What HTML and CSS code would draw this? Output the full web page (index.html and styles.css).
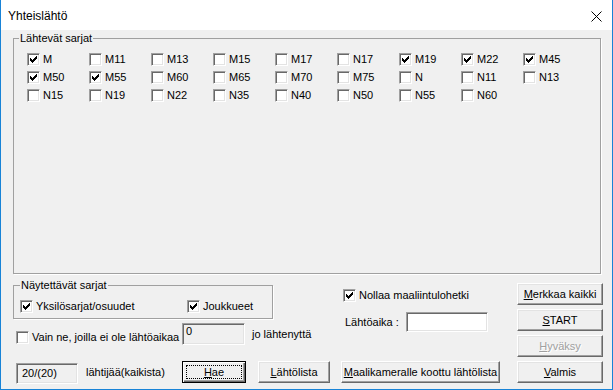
FILE: index.html
```html
<!DOCTYPE html>
<html lang="fi">
<head>
    <meta charset="UTF-8">
    <title>Yhteislähtö</title>
    <link rel="stylesheet" href="styles.css">
</head>
<body>
    <svg class="defs" width="0" height="0">
        <symbol id="tick" viewBox="0 0 11 11">
            <path d="M8 2h1v1h-1z M7 3h2v1h-2z M2 4h1v1h-1z M6 4h3v1h-3z M2 5h2v1h-2z M5 5h3v1h-3z M2 6h5v1h-5z M3 7h3v1h-3z M4 8h1v1h-1z"/>
        </symbol>
    </svg>
    <div class="window">
        <div class="titlebar">
            <span>Yhteislähtö</span>
            <svg class="close" viewBox="0 0 11 11"><path d="M0.5 0.5L10.5 10.5M10.5 0.5L0.5 10.5" stroke="#000" stroke-width="1"/></svg>
        </div>
        <div class="content">
            <fieldset class="group series">
                <legend>Lähtevät sarjat</legend>
                <div class="series-grid">
                    <span class="check"><span class="box"><svg class="tick"><use href="#tick"/></svg></span>M</span>
                    <span class="check"><span class="box"></span>M11</span>
                    <span class="check"><span class="box"></span>M13</span>
                    <span class="check"><span class="box"></span>M15</span>
                    <span class="check"><span class="box"></span>M17</span>
                    <span class="check"><span class="box"></span>N17</span>
                    <span class="check"><span class="box"><svg class="tick"><use href="#tick"/></svg></span>M19</span>
                    <span class="check"><span class="box"><svg class="tick"><use href="#tick"/></svg></span>M22</span>
                    <span class="check"><span class="box"><svg class="tick"><use href="#tick"/></svg></span>M45</span>

                    <span class="check"><span class="box"><svg class="tick"><use href="#tick"/></svg></span>M50</span>
                    <span class="check"><span class="box"><svg class="tick"><use href="#tick"/></svg></span>M55</span>
                    <span class="check"><span class="box"></span>M60</span>
                    <span class="check"><span class="box"></span>M65</span>
                    <span class="check"><span class="box"></span>M70</span>
                    <span class="check"><span class="box"></span>M75</span>
                    <span class="check"><span class="box"></span>N</span>
                    <span class="check"><span class="box"></span>N11</span>
                    <span class="check"><span class="box"></span>N13</span>

                    <span class="check"><span class="box"></span>N15</span>
                    <span class="check"><span class="box"></span>N19</span>
                    <span class="check"><span class="box"></span>N22</span>
                    <span class="check"><span class="box"></span>N35</span>
                    <span class="check"><span class="box"></span>N40</span>
                    <span class="check"><span class="box"></span>N50</span>
                    <span class="check"><span class="box"></span>N55</span>
                    <span class="check"><span class="box"></span>N60</span>
                </div>
            </fieldset>

            <div class="lower">
                <div class="lower-left">
                    <div class="upper">
                        <div class="col-a">
                            <fieldset class="group shown">
                                <legend>Näytettävät sarjat</legend>
                                <div class="shown-row">
                                    <span class="check wide"><span class="box"><svg class="tick"><use href="#tick"/></svg></span>Yksilösarjat/osuudet</span>
                                    <span class="check"><span class="box"><svg class="tick"><use href="#tick"/></svg></span>Joukkueet</span>
                                </div>
                            </fieldset>
                            <div class="vain-row">
                                <span class="check vain"><span class="box"></span>Vain ne, joilla ei ole lähtöaikaa</span>
                                <span class="field zero">0</span>
                                <span class="after">jo lähtenyttä</span>
                            </div>
                        </div>
                        <div class="col-b">
                            <span class="check"><span class="box"><svg class="tick"><use href="#tick"/></svg></span>Nollaa maaliintulohetki</span>
                            <div class="time-row">
                                <span class="time-label">Lähtöaika :</span>
                                <span class="field white"></span>
                            </div>
                        </div>
                    </div>
                    <div class="bottom-row">
                        <span class="field count">20/(20)</span>
                        <span class="count-label">lähtijää(kaikista)</span>
                        <button class="btn default hae"><u>H</u>ae</button>
                        <button class="btn list"><u>L</u>ähtölista</button>
                        <button class="btn camera"><u>M</u>aalikameralle koottu lähtölista</button>
                    </div>
                </div>
                <div class="buttons">
                    <button class="btn"><u>M</u>erkkaa kaikki</button>
                    <button class="btn"><u>S</u>TART</button>
                    <button class="btn disabled"><u>H</u>yväksy</button>
                    <button class="btn"><u>V</u>almis</button>
                </div>
            </div>
        </div>
    </div>
</body>
</html>
```

FILE: styles.css
```css
* { box-sizing: border-box; }
body { margin: 0; font-family: "Liberation Sans", Arial, sans-serif; font-size: 11px; color: #000; background: #f0f0f0; }
.defs { position: absolute; }

.window { width: 613px; height: 390px; border: 1px solid #1883d7; border-top: none; background: #f0f0f0; }
.titlebar { height: 30px; background: #fff; display: flex; align-items: center; justify-content: space-between; padding: 2px 10px 0 7px; font-size: 12px; }
.close { width: 11px; height: 11px; display: block; }
.content { padding: 2px 0 0 12px; }

/* group boxes */
.group { margin: 0; border: 1px solid #a0a0a0; box-shadow: 1px 1px 0 #fff; min-width: 0; }
.group legend { padding: 0 1px; line-height: 13px; }
.series { width: 588px; padding: 5px 0 0 13px; }
.series legend { margin-left: -8px; }
.series-grid { display: grid; grid-template-columns: repeat(9, 62px); grid-auto-rows: 18px; align-content: start; height: 223px; }

/* checkbox */
.check { display: flex; align-items: center; height: 18px; white-space: nowrap; }
.box {
    width: 13px; height: 13px; flex: none; margin-right: 3px; background: #fff;
    border: 1px solid; border-color: #a0a0a0 #fff #fff #a0a0a0;
    box-shadow: inset 1px 1px #696969, inset -1px -1px #e3e3e3;
}
.tick { width: 11px; height: 11px; display: block; fill: #000; shape-rendering: crispEdges; }

/* fields */
.field {
    display: block; border: 1px solid; border-color: #a0a0a0 #fff #fff #a0a0a0;
    box-shadow: inset 1px 1px #696969, inset -1px -1px #e3e3e3;
    background: #f0f0f0; padding: 1px 3px; line-height: 13px;
}
.field.white { background: #fff; }

/* buttons */
.btn {
    height: 22px; padding: 0; font: inherit; color: #000; background: #f0f0f0; text-align: center;
    border: 1px solid; border-color: #fff #696969 #696969 #fff;
    box-shadow: inset -1px -1px #a0a0a0, inset 1px 1px #e3e3e3;
}
.btn.default {
    border: 1px solid #000;
    box-shadow: inset 1px 1px #fff, inset -1px -1px #696969, inset -2px -2px #a0a0a0;
    outline: 1px dotted #000; outline-offset: -5px;
}
.btn.disabled { color: #a0a0a0; text-shadow: 1px 1px #fff; }

/* lower part */
.lower { display: flex; margin-top: 5px; }
.lower-left { width: 504px; }
.upper { display: flex; }
.col-a { width: 330px; }
.shown { width: 260px; padding: 5px 0 3px 6px; }
.shown-row { display: flex; }
.check.wide { width: 167px; }

.vain-row { display: flex; align-items: center; height: 22px; margin-top: 4px; }
.vain { width: 166px; margin: 6px 0 0 3px; }
.zero { width: 63px; height: 22px; }
.after { margin-left: 7px; }

.col-b { padding-top: 7px; }
.time-row { display: flex; align-items: center; height: 20px; margin-top: 8px; padding-left: 2px; }
.time-label { width: 61px; }
.time-row .field { width: 82px; height: 20px; }

.bottom-row { display: flex; align-items: flex-start; margin-top: 16px; height: 22px; }
.count { width: 62px; height: 21px; margin: 2px 0 0 3px; padding: 3px 3px 0 5px; }
.count-label { width: 96px; margin-left: 8px; line-height: 22px; }
.hae { width: 64px; }
.list { width: 72px; margin-left: 12px; }
.camera { width: 159px; margin-left: 11px; }

.buttons { display: flex; flex-direction: column; gap: 4px; padding-top: 4px; width: 86px; }
```
